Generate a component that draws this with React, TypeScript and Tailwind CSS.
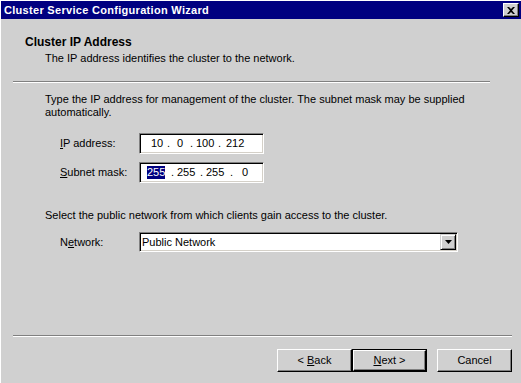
import React from 'react';

const font = "font-['Liberation_Sans',Arial,sans-serif]";

const Separator = ({ className = '' }: { className?: string }) => (
  <div className={`h-[2px] border-t border-t-[#808080] border-b border-b-white ${className}`} />
);

const Field = ({ children, className = '' }: { children: React.ReactNode; className?: string }) => (
  <div
    className={`bg-white border border-t-[#808080] border-l-[#808080] border-b-white border-r-white shadow-[inset_1px_1px_0_#000,inset_-1px_-1px_0_#d4d0c8] ${className}`}
  >
    {children}
  </div>
);

const WinButton = ({ children, isDefault = false }: { children: React.ReactNode; isDefault?: boolean }) => (
  <div className={`w-[75px] h-[23px] ${isDefault ? 'border border-black' : ''}`}>
    <div className="w-full h-full flex items-center justify-center border border-t-white border-l-white border-b-black border-r-black shadow-[inset_-1px_-1px_0_#808080] text-[11px] text-black">
      {children}
    </div>
  </div>
);

export default function App() {
  return (
    <div className={`w-[521px] h-[383px] bg-[#d0d0d0] border-t border-l border-white flex flex-col ${font} text-[11px] text-black overflow-hidden`}>
      {/* title bar */}
      <div className="h-[18px] bg-[#000080] flex items-center justify-between pl-[3px] pr-[2px]">
        <span className="text-white font-bold text-[11px] tracking-[0.3px] leading-none">Cluster Service Configuration Wizard</span>
        <div className="w-[16px] h-[14px] bg-[#d0d0d0] border border-t-white border-l-white border-b-black border-r-black shadow-[inset_-1px_-1px_0_#808080] flex items-center justify-center">
          <svg width="8" height="7" viewBox="0 0 8 7">
            <path d="M0 0h2l2 2 2-2h2L5 3.5 8 7H6L4 5 2 7H0l3-3.5z" fill="#000" />
          </svg>
        </div>
      </div>

      {/* header */}
      <div className="pl-[24px] pt-[16px]">
        <div className="font-bold text-[12px] leading-[14px]">Cluster IP Address</div>
        <div className="pl-[20px] mt-[3px] leading-[13px]">The IP address identifies the cluster to the network.</div>
      </div>
      <Separator className="ml-[12px] w-[477px] mt-[16px]" />

      {/* body */}
      <div className="pl-[44px] pt-[10px]">
        <div className="leading-[13px] w-[450px]">
          Type the IP address for management of the cluster. The subnet mask may be supplied automatically.
        </div>

        <div className="flex items-center mt-[14px] pl-[15px]">
          <span className="w-[79px]"><u>I</u>P address:</span>
          <Field className="w-[125px] h-[21px] flex items-center pl-[11px]">
            <span className="w-[16px]">10</span>
            <span className="w-[10px]">.</span>
            <span className="w-[13px]">0</span>
            <span className="w-[6px]">.</span>
            <span className="w-[22px]">100</span>
            <span className="w-[8px]">.</span>
            <span>212</span>
          </Field>
        </div>

        <div className="flex items-center mt-[8px] pl-[15px]">
          <span className="w-[79px]"><u>S</u>ubnet mask:</span>
          <Field className="w-[125px] h-[21px] flex items-center pl-[7px]">
            <span className="w-[18px] bg-[#000080] text-white leading-[13px]">255</span>
            <span className="ml-[6px] w-[6px]">.</span>
            <span className="w-[23px]">255</span>
            <span className="w-[6px]">.</span>
            <span className="w-[24px]">255</span>
            <span className="w-[12px]">.</span>
            <span>0</span>
          </Field>
        </div>

        <div className="mt-[26px] leading-[13px]">
          Select the public network from which clients gain access to the cluster.
        </div>

        <div className="flex items-center mt-[10px] pl-[15px]">
          <span className="w-[79px]">N<u>e</u>twork:</span>
          <Field className="w-[319px] h-[20px] flex items-center justify-between pl-[2px] pr-[1px]">
            <span>Public Network</span>
            <div className="w-[16px] h-[16px] bg-[#d0d0d0] border border-t-[#d0d0d0] border-l-[#d0d0d0] border-b-black border-r-black shadow-[inset_1px_1px_0_#fff,inset_-1px_-1px_0_#808080] flex items-center justify-center">
              <svg width="7" height="4" viewBox="0 0 7 4">
                <path d="M0 0h7L3.5 4z" fill="#000" />
              </svg>
            </div>
          </Field>
        </div>
      </div>

      <div className="flex-1" />
      <Separator className="ml-[12px] w-[499px]" />

      {/* buttons */}
      <div className="flex justify-end items-center pr-[9px] pt-[12px] pb-[11px]">
        <WinButton>&lt; <u className="ml-[3px]">B</u>ack</WinButton>
        <WinButton isDefault><u>N</u>ext &gt;</WinButton>
        <div className="w-[10px]" />
        <WinButton>Cancel</WinButton>
      </div>
    </div>
  );
}
